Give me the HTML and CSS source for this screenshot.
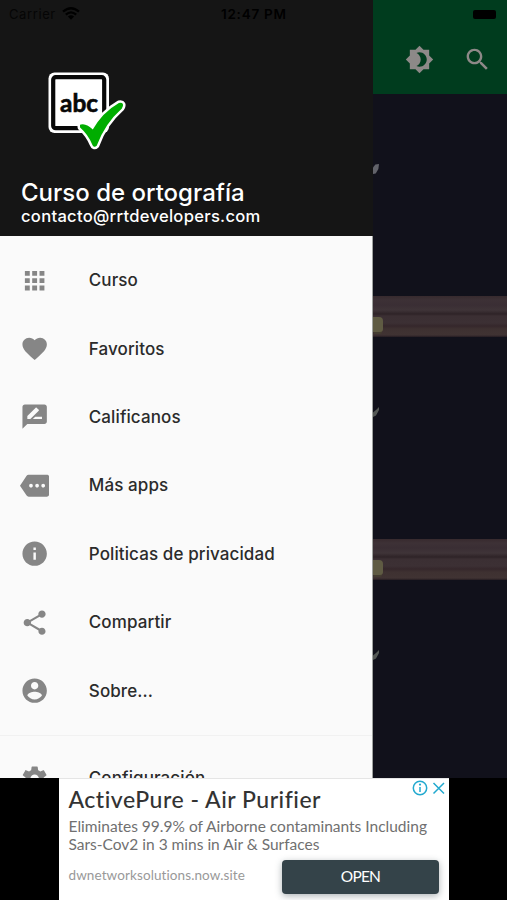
FILE: index.html
```html
<!DOCTYPE html>
<html lang="es">
<head>
<meta charset="utf-8">
<title>Curso de ortografía</title>
<link rel="stylesheet" href="styles.css">
</head>
<body>
<div class="phone">
  <main class="screen">
    <header class="appbar">
      <svg class="bar-icon" viewBox="0 0 24 24"><path fill-rule="evenodd" d="M20 8.690V4h-4.690L12 .69 8.690 4H4v4.690L.69 12 4 15.310V20h4.690L12 23.310 15.310 20H20v-4.690L23.310 12 20 8.690zM12 18c-.89 0-1.740-.2-2.500-.55C11.560 16.500 13 14.420 13 12s-1.440-4.500-3.500-5.450C10.260 6.200 11.110 6 12 6c3.310 0 6 2.690 6 6s-2.690 6-6 6z"/></svg>
      <svg class="bar-icon" viewBox="0 0 24 24"><path d="M15.500 14h-.79l-.28-.27C15.410 12.590 16 11.110 16 9.500 16 5.910 13.090 3 9.500 3S3 5.910 3 9.500 5.910 16 9.500 16c1.610 0 3.090-.59 4.230-1.570l.27.28v.79l5 4.990L20.490 19l-4.990-5zm-6 0C7.010 14 5 11.990 5 9.500S7.010 5 9.500 5 14 7.010 14 9.500 11.990 14 9.500 14z"/></svg>
    </header>
    <div class="shelves">
      <section class="shelf"><i class="leaf"></i><div class="board"><i class="candle"></i></div></section>
      <section class="shelf"><i class="leaf thin"></i><div class="board"><i class="candle"></i></div></section>
      <section class="shelf"><i class="leaf thin"></i></section>
    </div>
  </main>

  <aside class="drawer">
    <header class="account">
      <svg class="logo" viewBox="0 0 80 82">
        <rect x="1.500" y="1.500" width="60.500" height="60.500" rx="6" fill="#fff"/>
        <rect x="6.200" y="6.200" width="51" height="51" rx="2.500" fill="#fff" stroke="#080808" stroke-width="4.200"/>
        <text class="logo-text" x="32" y="40.500" text-anchor="middle" textLength="38" lengthAdjust="spacingAndGlyphs">abc</text>
        <path class="check-edge" d="M34 54.500Q39 53 46 60Q56 42 72 33Q77 32 74 37Q57 52 49 74Q47 76 46 73Q42 63 34 56Z"/>
        <path class="check" d="M34 54.500Q39 53 46 60Q56 42 72 33Q77 32 74 37Q57 52 49 74Q47 76 46 73Q42 63 34 56Z"/>
      </svg>
      <div class="account-name">Curso de ortografía</div>
      <div class="account-mail">contacto@rrtdevelopers.com</div>
    </header>
    <nav class="menu">
      <a class="item"><svg viewBox="0 0 24 24"><path d="M4 8h4V4H4v4zm6 12h4v-4h-4v4zm-6 0h4v-4H4v4zm0-6h4v-4H4v4zm6 0h4v-4h-4v4zm6-10v4h4V4h-4zm-6 4h4V4h-4v4zm6 6h4v-4h-4v4zm0 6h4v-4h-4v4z"/></svg><span>Curso</span></a>
      <a class="item"><svg viewBox="0 0 24 24"><path d="M12 21.350l-1.450-1.320C5.400 15.360 2 12.280 2 8.500 2 5.420 4.420 3 7.500 3c1.740 0 3.410.81 4.500 2.090C13.090 3.810 14.760 3 16.500 3 19.580 3 22 5.420 22 8.500c0 3.780-3.400 6.860-8.550 11.540L12 21.350z"/></svg><span>Favoritos</span></a>
      <a class="item"><svg viewBox="0 0 24 24"><path d="M20 2H4c-1.100 0-1.990.9-1.990 2L2 22l4-4h14c1.100 0 2-.9 2-2V4c0-1.100-.9-2-2-2zM6 14v-2.470l6.880-6.880c.2-.2.51-.2.71 0l1.770 1.770c.2.2.2.51 0 .71L8.470 14H6zm12 0h-7.500l2-2H18v2z"/></svg><span>Calificanos</span></a>
      <a class="item"><svg viewBox="0 0 24 24"><path d="M22 3H7c-.69 0-1.230.35-1.590.88L0 12l5.410 8.110c.36.53.97.89 1.660.89H22c1.100 0 2-.9 2-2V5c0-1.100-.9-2-2-2zM9 13.500c-.83 0-1.500-.67-1.500-1.500s.67-1.500 1.500-1.500 1.500.67 1.500 1.500-.67 1.500-1.500 1.500zm5 0c-.83 0-1.500-.67-1.500-1.500s.67-1.500 1.500-1.500 1.500.67 1.500 1.500-.67 1.500-1.500 1.500zm5 0c-.83 0-1.500-.67-1.500-1.500s.67-1.500 1.500-1.500 1.500.67 1.500 1.500-.67 1.500-1.500 1.500z"/></svg><span>Más apps</span></a>
      <a class="item"><svg viewBox="0 0 24 24"><path d="M12 2C6.480 2 2 6.480 2 12s4.480 10 10 10 10-4.480 10-10S17.520 2 12 2zm1 15h-2v-6h2v6zm0-8h-2V7h2v2z"/></svg><span>Politicas de privacidad</span></a>
      <a class="item"><svg viewBox="0 0 24 24"><path d="M18 16.080c-.76 0-1.440.3-1.960.77L8.910 12.700c.05-.23.09-.46.09-.7s-.04-.47-.09-.7l7.050-4.110c.54.5 1.250.81 2.040.81 1.660 0 3-1.340 3-3s-1.340-3-3-3-3 1.340-3 3c0 .24.04.47.09.7L8.040 9.810C7.500 9.310 6.790 9 6 9c-1.660 0-3 1.340-3 3s1.340 3 3 3c.79 0 1.500-.31 2.040-.81l7.120 4.160c-.05.21-.08.43-.08.65 0 1.610 1.310 2.920 2.920 2.920s2.920-1.310 2.920-2.920-1.310-2.920-2.920-2.920z"/></svg><span>Compartir</span></a>
      <a class="item"><svg viewBox="0 0 24 24"><path d="M12 2C6.480 2 2 6.480 2 12s4.480 10 10 10 10-4.480 10-10S17.520 2 12 2zm0 3c1.660 0 3 1.340 3 3s-1.340 3-3 3-3-1.340-3-3 1.340-3 3-3zm0 14.200c-2.500 0-4.710-1.280-6-3.220.03-1.990 4-3.080 6-3.080 1.990 0 5.970 1.090 6 3.080-1.290 1.940-3.500 3.220-6 3.220z"/></svg><span>Sobre...</span></a>
      <hr class="divider">
      <a class="item"><svg viewBox="0 0 24 24"><path d="M19.430 12.980c.04-.32.07-.64.07-.98s-.03-.66-.07-.98l2.110-1.650c.19-.15.24-.42.12-.64l-2-3.460c-.12-.22-.39-.3-.61-.22l-2.490 1c-.52-.4-1.080-.73-1.690-.98l-.38-2.650C14.460 2.180 14.250 2 14 2h-4c-.25 0-.46.18-.49.42l-.38 2.650c-.61.25-1.170.59-1.690.98l-2.490-1c-.23-.09-.49 0-.61.22l-2 3.460c-.13.22-.07.49.12.64l2.110 1.650c-.04.32-.07.65-.07.98s.03.66.07.98l-2.110 1.650c-.19.15-.24.42-.12.64l2 3.460c.12.22.39.3.61.22l2.490-1c.52.4 1.080.73 1.690.98l.38 2.650c.03.24.24.42.49.42h4c.25 0 .46-.18.49-.42l.38-2.650c.61-.25 1.170-.59 1.690-.98l2.490 1c.23.09.49 0 .61-.22l2-3.460c.12-.22.07-.49-.12-.64l-2.110-1.650zM12 15.500c-1.930 0-3.500-1.570-3.500-3.500s1.570-3.500 3.500-3.500 3.500 1.570 3.500 3.500-1.570 3.500-3.500 3.500z"/></svg><span>Configuración</span></a>
    </nav>
  </aside>

  <div class="status">
    <span class="carrier">Carrier</span>
    <svg class="wifi" viewBox="0 0 18 13"><path d="M1 4.700Q9-2.300 17 4.700M3.800 7.600Q9 3.200 14.200 7.600"/><path class="dot" d="M5.900 9.600Q9 7.100 12.100 9.600L9 12.800Z"/></svg>
    <span class="time">12:47 PM</span>
    <i class="battery"></i>
  </div>

  <footer class="ad-strip">
    <div class="ad">
      <div class="ad-top">
        <h2>ActivePure - Air Purifier</h2>
        <svg class="ad-marks" viewBox="0 0 34 16"><circle cx="8" cy="8" r="6.700"/><path d="M8 7V12M21.500 3L32 13.500M32 3L21.500 13.500"/><circle class="fill" cx="8" cy="4.600" r="1.100"/></svg>
      </div>
      <p class="ad-copy"><span>Eliminates 99.9% of Airborne contaminants Including</span><br><span>Sars-Cov2 in 3 mins in Air &amp; Surfaces</span></p>
      <div class="ad-bottom">
        <span class="site">dwnetworksolutions.now.site</span>
        <a class="open">OPEN</a>
      </div>
    </div>
  </footer>
</div>
</body>
</html>
```
FILE: styles.css
```css
* { box-sizing: border-box; }
body { margin: 0; background: #000; font-family: Inter, "Liberation Sans", sans-serif; }
svg { display: block; flex: none; }
.phone { position: relative; width: 507px; height: 900px; overflow: hidden; display: flex; flex-direction: column; }

.screen { flex: none; height: 778px; display: flex; flex-direction: column; overflow: hidden; }
.appbar { height: 94px; flex: none; background: #003c1e; display: flex; justify-content: flex-end; align-items: flex-end; gap: 29px; padding: 0 15.500px 20px 0; }
.bar-icon { width: 29px; height: 29px; fill: #8d8988; }
.shelves { flex: 1; background: #11111b; padding-left: 373px; }
.shelf { height: 243px; display: flex; flex-direction: column; justify-content: space-between; }
.leaf { width: 6px; height: 10px; margin-top: 70px; background: #62636a; clip-path: polygon(0 35%, 40% 5%, 100% 0, 90% 50%, 45% 95%, 0 100%); }
.leaf.thin { background: #545855; clip-path: polygon(100% 0, 100% 30%, 50% 85%, 0 100%, 0 55%, 50% 30%); }
.board { height: 41px; padding-top: 21px; background: linear-gradient(#372a2e 0, #3d3136 4px, #3a2e34 9px, #3f3438 14px, #2e2327 18px, #3b2f33 20px, #3c3034 27px, #35272b 30px, #3e3131 33px, #403333 39px, #251c22 41px); }
.candle { display: block; width: 10px; height: 15px; background: #5f5b43; border-radius: 0 4px 3px 0; box-shadow: 0 3px 0 -1px #443d31; }

.drawer { position: absolute; left: 0; top: 0; width: 373px; height: 778px; overflow: hidden; }
.account { height: 236px; background: #151515; padding: 71px 0 0 21px; color: #fff; white-space: nowrap; }
.logo { width: 80px; height: 82px; margin-left: 26px; }
.logo-text { font: 700 24px Lato, sans-serif; fill: #080808; stroke: #080808; stroke-width: .6; }
.check-edge { fill: #fff; stroke: #fff; stroke-width: 7; stroke-linejoin: round; }
.check { fill: #00ad00; stroke: #00ad00; stroke-width: 2; stroke-linejoin: round; }
.account-name { margin-top: 25px; height: 28px; line-height: 29px; font-size: 24px; font-weight: 500; }
.account-mail { height: 20px; line-height: 20px; font-size: 16.600px; font-weight: 500; letter-spacing: .27px; }
.menu { height: 542px; padding-top: 10px; background: #fafafa; border-right: 1px solid #a0a3a0; }
.item { height: 68.400px; display: flex; align-items: center; gap: 39.500px; padding-left: 20px; color: #2b2b2b; font-size: 17px; font-weight: 500; letter-spacing: .1px; white-space: nowrap; }
.item svg { width: 29.300px; height: 29.300px; fill: #868686; }
.divider { margin: 10px 0 8.500px; border: 0; height: 1px; background: #f1f1f1; }

.status { position: absolute; left: 0; top: 0; width: 507px; height: 28px; display: grid; grid-template-columns: 53px 167px 1fr auto; align-items: center; padding: 0 11px 0 9px; color: #000; font-size: 13px; white-space: nowrap; }
.carrier { color: #050505; letter-spacing: .6px; }
.wifi { width: 18px; height: 13px; margin-top: -1px; fill: none; stroke: #000; stroke-width: 2.300; }
.wifi .dot { fill: #000; stroke: none; }
.time { font-size: 13.500px; font-weight: 600; letter-spacing: .75px; margin-left: -8px; }
.battery { width: 23px; height: 9px; border-radius: 2px; background: #000; }

.ad-strip { height: 122px; background: #000; display: flex; padding-left: 59px; }
.ad { width: 390px; height: 122px; background: #fff; padding: 5px 0 0 9.500px; border-top: 1px solid #e5e5e5; font-family: Lato, sans-serif; white-space: nowrap; }
.ad-top { display: flex; justify-content: space-between; height: 33px; }
.ad h2 { margin: 0; font-size: 23px; line-height: 30px; font-weight: 500; letter-spacing: .5px; color: #333; }
.ad-marks { width: 34px; height: 16px; margin: -4px 3px 0 0; fill: none; stroke: #22a9cf; stroke-width: 1.500; }
.ad-marks .fill { fill: #22a9cf; stroke: none; }
.ad-copy { margin: 0; font-size: 15.500px; line-height: 18px; color: #707070; }
.ad-bottom { display: flex; justify-content: space-between; padding-right: 10px; margin-top: 7px; }
.site { font-size: 13.500px; line-height: 31px; letter-spacing: .1px; color: #999; }
.open { width: 157px; height: 34px; border-radius: 4px; background: #344349; color: #fff; text-align: center; font-size: 15.500px; letter-spacing: -.8px; line-height: 32px; box-shadow: 0 2px 7px #34434966; }
```
